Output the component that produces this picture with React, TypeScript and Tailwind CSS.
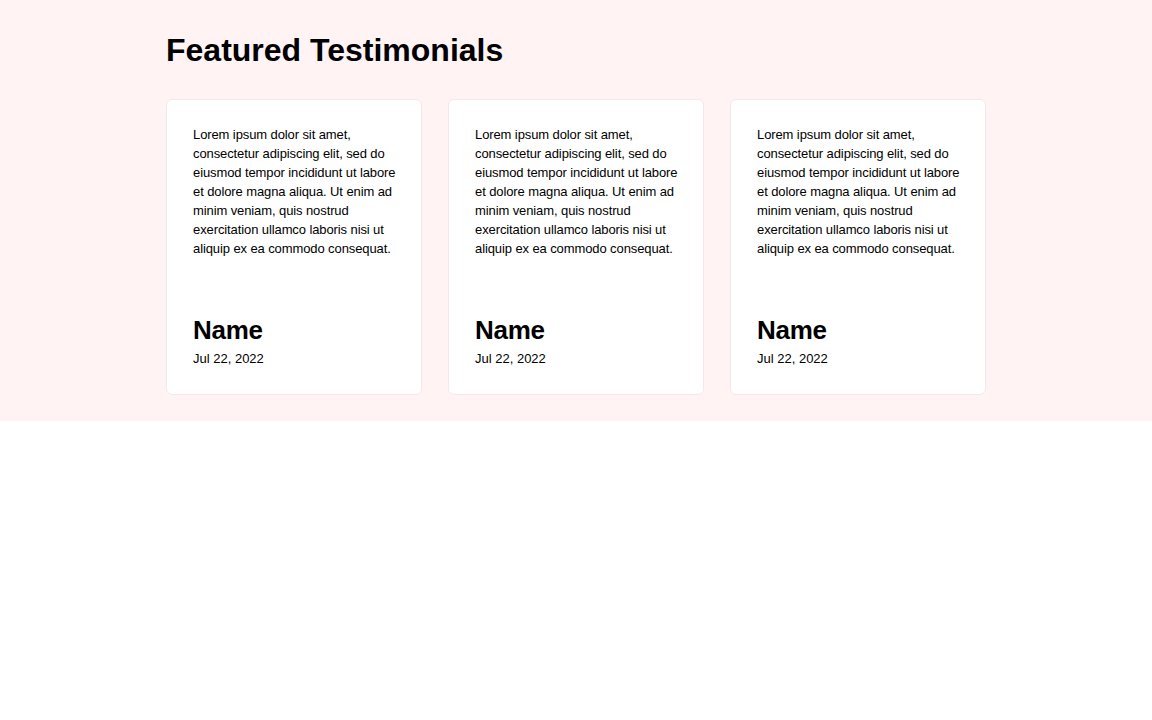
import React from 'react';

const LOREM =
  'Lorem ipsum dolor sit amet, consectetur adipiscing elit, sed do eiusmod tempor incididunt ut labore et dolore magna aliqua. Ut enim ad minim veniam, quis nostrud exercitation ullamco laboris nisi ut aliquip ex ea commodo consequat.';

const items = [
  { id: 1, name: 'Name', date: 'Jul 22, 2022', text: LOREM },
  { id: 2, name: 'Name', date: 'Jul 22, 2022', text: LOREM },
  { id: 3, name: 'Name', date: 'Jul 22, 2022', text: LOREM },
];

export default function App() {
  return (
    <div className="min-h-[720px] bg-white font-['Liberation_Sans',Arial,sans-serif] text-black">
      <section className="bg-[#fff3f4] pt-[30px] pb-[26px]">
        <div className="mx-auto w-[820px]">
          <h2 className="text-[32px] font-bold leading-[40px]">Featured Testimonials</h2>
          <div className="mt-[29px] grid grid-cols-3 gap-[26px]">
            {items.map((item) => (
              <div key={item.id} className="flex flex-col rounded-md border border-[#f5e8ea] bg-white">
                <p className="h-[186px] pl-[26px] pr-[24px] pt-[25px] text-[13px] leading-[19px] tracking-[-0.1px]">
                  {item.text}
                </p>
                <div className="px-[26px] pt-[28px] pb-[27px]">
                  <h3 className="text-[26px] font-bold leading-[32px] tracking-[-0.3px]">{item.name}</h3>
                  <p className="mt-[5px] text-[13px] leading-[16px]">{item.date}</p>
                </div>
              </div>
            ))}
          </div>
        </div>
      </section>
    </div>
  );
}
